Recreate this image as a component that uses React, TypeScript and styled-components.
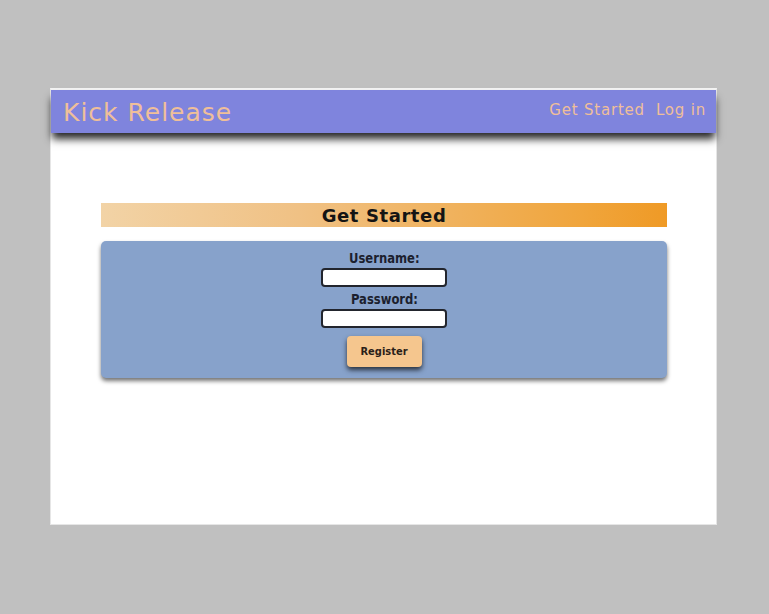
import React, { useState } from 'react';
import styled, { createGlobalStyle } from 'styled-components';

const GlobalStyle = createGlobalStyle`
  html, body {
    margin: 0;
    padding: 0;
    background: #c0c0c0;
  }
  * {
    box-sizing: border-box;
  }
`;

function App() {
  const [username, setUsername] = useState('');
  const [password, setPassword] = useState('');

  const onFormSubmit = (e: React.FormEvent<HTMLFormElement>) => {
    e.preventDefault();
  };

  return (
    <>
      <GlobalStyle />
      <Stage>
        <Frame>
          <Header>
            <Logo>Kick Release</Logo>
            <Nav>
              <NavLink href='#'>Get Started</NavLink>
              <NavLink href='#'>Log in</NavLink>
            </Nav>
          </Header>
          <Main>
            <TitleBar>Get Started</TitleBar>
            <Card onSubmit={onFormSubmit}>
              <Label htmlFor='username'>Username:</Label>
              <Input id='username' value={username} onChange={(e) => setUsername(e.target.value)} />
              <Label htmlFor='password'>Password:</Label>
              <Input
                id='password'
                type='password'
                value={password}
                onChange={(e) => setPassword(e.target.value)}
              />
              <RegisterButton type='submit'>Register</RegisterButton>
            </Card>
          </Main>
        </Frame>
      </Stage>
    </>
  );
}

const Stage = styled.div`
  width: 769px;
  height: 614px;
  padding: 88px 0 0 50px;
`;

const Frame = styled.div`
  width: 667px;
  height: 437px;
  background: #ffffff;
  border: 1px solid #e6e6e6;
  border-top: 2px solid #f4f4f4;
  display: flex;
  flex-direction: column;
`;

const Header = styled.header`
  height: 43px;
  background: #7f84dd;
  display: flex;
  align-items: center;
  justify-content: space-between;
  padding: 0 10px 0 12px;
  box-shadow: 0 7px 8px -1px rgba(0, 0, 0, 0.85);
  position: relative;
  z-index: 1;
`;

const Logo = styled.div`
  font-family: 'DejaVu Sans', sans-serif;
  font-size: 25px;
  font-weight: 500;
  color: #efbf99;
  letter-spacing: 1px;
  padding-top: 2px;
`;

const Nav = styled.nav`
  display: flex;
  gap: 11px;
  padding-bottom: 4px;
`;

const NavLink = styled.a`
  font-family: 'DejaVu Sans', sans-serif;
  font-size: 15px;
  color: #efbf99;
  letter-spacing: 0.8px;
  text-decoration: none;
`;

const Main = styled.main`
  display: flex;
  flex-direction: column;
  padding: 70px 49px 0 50px;
`;

const TitleBar = styled.h2`
  margin: 0 0 14px;
  height: 24px;
  background: linear-gradient(to right, #f2d3a6, #f0c184 35%, #f0a53c 85%, #ef9a26);
  font-family: 'DejaVu Sans', sans-serif;
  font-weight: bold;
  font-size: 18px;
  line-height: 25px;
  letter-spacing: 0.6px;
  text-align: center;
  color: #141414;
`;

const Card = styled.form`
  height: 137px;
  background: #87a2cb;
  border-radius: 5px;
  box-shadow: 0 3px 4px rgba(0, 0, 0, 0.55);
  display: flex;
  flex-direction: column;
  align-items: center;
  padding-top: 9px;
`;

const Label = styled.label`
  font-family: 'DejaVu Sans', sans-serif;
  font-stretch: condensed;
  font-weight: bold;
  font-size: 14px;
  line-height: 17px;
  color: #1c1f2e;
  transform: scaleX(0.92);
`;

const Input = styled.input`
  width: 126px;
  height: 19px;
  margin: 1px 0 4px;
  border: 2px solid #22252d;
  border-radius: 4px;
  background: #ffffff;
  padding: 0 4px;
  font-size: 12px;

  &:focus {
    outline: none;
  }
`;

const RegisterButton = styled.button`
  margin-top: 4px;
  width: 75px;
  height: 31px;
  background: #f5c68e;
  border: none;
  border-radius: 4px;
  box-shadow: 0 3px 5px rgba(0, 0, 0, 0.7);
  font-family: 'DejaVu Sans', sans-serif;
  font-stretch: condensed;
  font-weight: bold;
  font-size: 11px;
  color: #2a2018;
  cursor: pointer;
`;

export default App;
